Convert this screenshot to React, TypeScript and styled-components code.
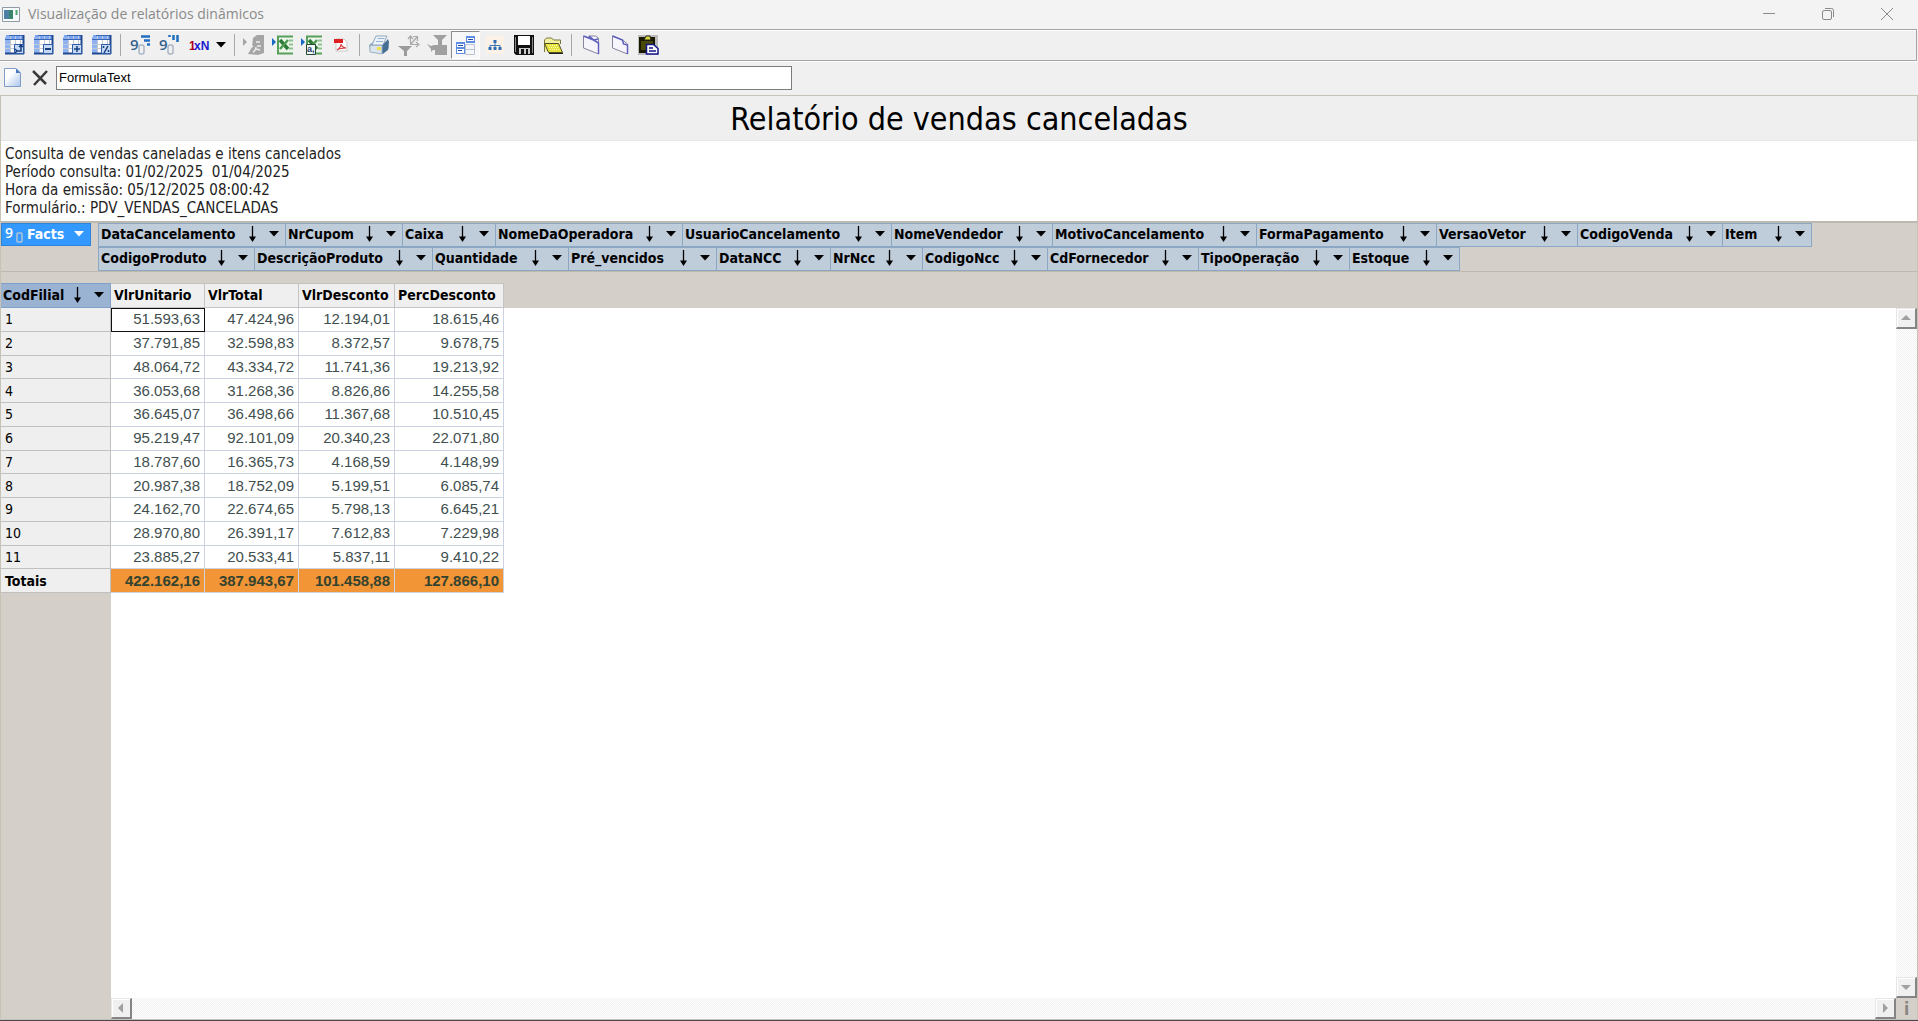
import React, { useState } from "react";
import styled, { createGlobalStyle, css } from "styled-components";

const ui = `Tahoma, "DejaVu Sans Condensed", "DejaVu Sans", sans-serif`;
const sans = `"Liberation Sans", Arial, sans-serif`;

const Global = createGlobalStyle`
  *, *::before, *::after { box-sizing: border-box; }
  body { margin: 0; background: #f0f0f0; color: #000; font-family: ${ui}; }
  button { margin: 0; padding: 0; border: 0; background: none; color: inherit; font: inherit; }
  svg { display: block; overflow: visible; }
`;

const Window = styled.div`
  display: flex;
  flex-direction: column;
  min-height: 100vh;
  border-bottom: 1px solid #4a4450;
`;

const TitleBar = styled.header`
  display: flex;
  align-items: center;
  height: 29px;
  padding: 0 2px 1px;
  background: #f3f3f3;
`;

const WindowTitle = styled.h1`
  flex: 1;
  margin: 0 0 0 8px;
  color: #8a8a8a;
  font: 400 14px/20px "Open Sans", "Noto Sans", sans-serif;
`;

const CaptionButton = styled.button`
  display: grid;
  place-items: center;
  width: 59px;
  height: 28px;
`;

const Toolbar = styled.div`
  display: flex;
  align-items: center;
  height: 32px;
  margin-right: 1px;
  border: 1px solid #a5a5a5;
  border-left: 0;
  box-shadow: inset 0 1px 0 #fff;
`;

const ToolButton = styled.button<{ $pressed?: boolean; $narrow?: boolean }>`
  display: grid;
  place-items: center;
  width: ${(p) => (p.$narrow ? 18 : 29)}px;
  height: 28px;
  ${(p) =>
    p.$pressed &&
    css`
      border: 1px solid #fff;
      border-top-color: #8b8b8b;
      border-left-color: #8b8b8b;
      background: #f8f8f8;
    `}
`;

const Separator = styled.span`
  width: 1px;
  height: 22px;
  margin: 0 4px;
  background: #a8a8a8;
`;

const FormulaBar = styled.div`
  display: flex;
  align-items: center;
  height: 34px;
  padding-bottom: 2px;
  border-top: 1px solid #fff;
`;

const FormulaButton = styled.button<{ $width: number }>`
  display: grid;
  place-items: center;
  width: ${(p) => p.$width}px;
  height: 24px;
`;

const FormulaInput = styled.input`
  width: 736px;
  max-width: 60%;
  height: 24px;
  padding: 0 2px;
  border: 1px solid #7c7c7c;
  border-radius: 0;
  background: #fff;
  color: #000;
  font: 13px ${sans};
  outline: 0;
`;

const Report = styled.main`
  flex: 1;
  display: flex;
  flex-direction: column;
  border: 1px solid #c6c3b4;
  background: #d4cfc8;
`;

const ReportTitle = styled.h2`
  margin: 0;
  height: 45px;
  border-bottom: 1px solid #e6e6e6;
  background: #efefef;
  font-size: 32px;
  font-weight: 400;
  line-height: 46px;
  text-align: center;
`;

const Description = styled.div`
  padding: 4px;
  background: #fff;
  color: #222;
  font-size: 15px;
  line-height: 18px;
  white-space: pre;
  height: 80px;
`;

const Fields = styled.section`
  display: flex;
  gap: 7px;
  border-top: 2px solid #bcbab0;
  border-bottom: 1px solid #bdb9ae;
`;

const FactsButton = styled.button`
  display: flex;
  align-items: center;
  gap: 3px;
  width: 90px;
  height: 23px;
  padding: 0 6px 2px 3px;
  border: 1px solid #2f83d8;
  background: #3399ff;
  color: #fff;
  font-size: 14px;
  font-weight: 700;
`;

const FactsLabel = styled.span`
  flex: 1;
  text-align: left;
`;

const ChipRows = styled.div`
  flex: 1;
`;

const ChipRow = styled.div`
  display: flex;
  height: 24px;
`;

const Chip = styled.button<{ $width: number }>`
  display: flex;
  align-items: center;
  flex: 0 0 ${(p) => p.$width}px;
  height: 24px;
  padding: 0 6px 2px 2px;
  border: 1px solid #8ba7c4;
  border-right-width: 0;
  background: #bfccda;
  font-size: 14px;
  font-weight: 700;
  white-space: nowrap;

  &:last-child {
    border-right-width: 1px;
  }
`;

const ChipLabel = styled.span`
  flex: 1;
  text-align: left;
`;

const Marks = styled.span`
  display: flex;
  align-items: center;
  gap: 13px;
`;

const DataArea = styled.div`
  flex: 1;
  display: grid;
  grid-template-columns: 1fr 21px;
  grid-template-rows: 1fr 21px;
  padding-top: 11px;
`;

const DataColumn = styled.div`
  display: flex;
  flex-direction: column;
`;

const Table = styled.table`
  width: 100%;
  height: 310px;
  table-layout: fixed;
  border-collapse: separate;
  border-spacing: 0;
`;

const Col = styled.col<{ $width?: number }>`
  width: ${(p) => (p.$width ? `${p.$width}px` : "auto")};
`;

const HeadCell = styled.th`
  height: 25px;
  padding: 0 0 2px 3px;
  border: 1px solid #c4c4c4;
  border-left-width: 0;
  background: #efefef;
  font-size: 14px;
  line-height: 20px;
  text-align: left;
  white-space: nowrap;
`;

const CornerCell = styled(HeadCell)`
  padding-left: 2px;
  border-color: #7fa0c8;
  background: #9ab3d3;
`;

const CornerButton = styled.button`
  display: flex;
  align-items: center;
  width: 100%;
  padding-right: 6px;
`;

const RowHead = styled.th<{ $bold?: boolean }>`
  padding: 0 0 0 4px;
  border: 1px solid #c0c0c0;
  border-width: 0 1px 1px 0;
  background: #efefef;
  font-size: 14px;
  font-weight: ${(p) => (p.$bold ? 700 : 400)};
  line-height: 20px;
  text-align: left;
`;

const Cell = styled.td<{ $selected?: boolean; $total?: boolean }>`
  padding: 0 4px 0 0;
  border: 1px solid #ccd2e0;
  border-width: 0 1px 1px 0;
  background: ${(p) => (p.$total ? "#f19537" : "#fff")};
  color: ${(p) => (p.$total ? "#34432f" : "#3f4f50")};
  font: ${(p) => (p.$total ? 700 : 400)} 15px/20px ${sans};
  text-align: right;
  ${(p) =>
    p.$selected &&
    css`
      outline: 1px solid #111;
      outline-offset: -1px;
    `}
`;

const Blank = styled.td<{ $white?: boolean }>`
  padding: 0;
  background: ${(p) => (p.$white ? "#fff" : "transparent")};
`;

const Rest = styled.div`
  flex: 1;
  display: flex;
`;

const RestSide = styled.div`
  width: 110px;
`;

const RestBody = styled.div`
  flex: 1;
  background: #fff;
`;

const track = css`
  display: flex;
  justify-content: space-between;
  background: repeating-conic-gradient(#fff 0 25%, #f1f1f1 0 50%) 0 0 / 2px 2px;
`;

const VerticalBar = styled.div`
  ${track}
  flex-direction: column;
  margin-top: 25px;
`;

const HorizontalBar = styled.div`
  ${track}
  margin-left: 110px;
`;

const ScrollButton = styled.button`
  display: grid;
  place-items: center;
  width: 21px;
  height: 21px;
  border: 1px solid #e6e6e6;
  border-right: 2px solid #858585;
  border-bottom: 2px solid #858585;
  background: #f0f0f0;
  box-shadow: inset 1px 1px 0 #fff;
`;

const InfoCorner = styled.button`
  color: #8a8583;
  font-size: 17px;
  font-weight: 700;
  line-height: 20px;
`;

const Svg = ({ w = 20, h = w, children }: { w?: number; h?: number; children: React.ReactNode }) => (
  <svg width={w} height={h} viewBox={`0 0 ${w} ${h}`} fill="none" aria-hidden="true">
    {children}
  </svg>
);

const DownArrow = () => (
  <Svg w={8} h={18}>
    <path d="M4.500 1v12" stroke="#000" strokeWidth="1.300" />
    <path d="M1 11.500h7L4.500 17z" fill="#000" />
  </Svg>
);

const Caret = ({ color = "#000" }: { color?: string }) => (
  <Svg w={10} h={6}>
    <path d="M0 0h10L5 5.500z" fill={color} />
  </Svg>
);

const FieldMarks = () => (
  <Marks>
    <DownArrow />
    <Caret />
  </Marks>
);

const SheetIcon = ({ children }: { children: React.ReactNode }) => (
  <Svg>
    <path d="M1 0h18v5H1z" fill="#7aa6f4" />
    <path d="M0 5h18v13H0z" fill="#fff" />
    <path d="M0 2h5v16H0z" fill="#8fb2f2" />
    <path d="M0 9.500h19M0 13.500h19M5.500 0v18M10.500 0v18M15.500 0v18" stroke="#c3c8d2" />
    <path d="M0 4.500h19M4 .5h15" stroke="#3a66b8" />
    <path d="M18.500 0v19M0 18.500h19" stroke="#20488f" strokeWidth="2" />
    <path d="M9.500 9.500h9v9h-9z" fill="#c5d8f5" stroke="#2f5ca8" />
    {children}
  </Svg>
);

const digits: React.CSSProperties = { fontFamily: "Open Sans, sans-serif", fontWeight: 600 };

const NineZero = ({ vertical }: { vertical?: boolean }) => (
  <Svg w={22} h={24}>
    <text x="1" y="17" fontSize="15" fill="#36628f" style={digits}>9</text>
    <rect x="10" y="12" width="5" height="9" rx="2" stroke="#a9b4c2" strokeWidth="1.500" />
    {vertical ? (
      <path d="M11.500 2v2M15.500 2v5M19.500 2v7" stroke="#1f6fc0" strokeWidth="2.500" />
    ) : (
      <path d="M12 3.500h9M15 7.500h6M18 11.500h3" stroke="#1f6fc0" strokeWidth="2.500" />
    )}
  </Svg>
);

const FilterCode = () => (
  <Svg>
    <text x="1" y="15" fontSize="12" fontWeight="700" fontFamily="Liberation Sans" fill="#b00020">1</text>
    <text x="6" y="15" fontSize="12" fontWeight="700" fontFamily="Liberation Sans" fill="#1a1ad0">xN</text>
  </Svg>
);

const ExcelIcon = ({ boxed }: { boxed?: boolean }) => (
  <Svg w={22} h={20}>
    <path d="M0 3l4 4-4 4z" fill="#1769c4" />
    <path d="M21 1.500H6v17h15" fill="#eef6ec" stroke="#56a05b" strokeWidth="2" />
    <path d="M17 5.500h4M17 9.500h4M17 13.500h4" stroke="#8fc093" strokeWidth="2" />
    <path d="M8 5l8 9" stroke="#2d7a36" strokeWidth="3.500" />
    <path d="M16 5l-8 9" stroke="#4d9a50" strokeWidth="2.500" />
    {boxed && (
      <>
        <path d="M5.500 9.500h9v10h-9z" fill="#f2f7f4" stroke="#204a35" />
        <text x="6" y="17" fontSize="9" fontWeight="700" fontFamily="Liberation Sans" fill="#173a6a">a,</text>
      </>
    )}
  </Svg>
);

const GreyExport = () => (
  <Svg w={22} h={20}>
    <path d="M0 3l4 4-4 4z" fill="#a5a5a5" />
    <path d="M10 3l4-3h7v18l-6 2-10-1 4-7z" fill="#a5a5a5" />
    <path d="M6 13l4-2M10 17c2-1 3-3 3-5M13 7h4M14 11h4M13 14l4 1" stroke="#ececec" strokeWidth="1.500" />
  </Svg>
);

const PdfIcon = () => (
  <Svg w={14} h={14}>
    <path d="M2 1h8l3 3v9H2z" fill="#fff" stroke="#c9c9c9" />
    <path d="M0 1h9v4H0z" fill="#e02020" />
    <path d="M3 12c3-2 4-5 4-6 0 2 3 4 5 4-3 0-6 0-9 2z" stroke="#d84040" strokeWidth="1.200" />
  </Svg>
);

const PrinterIcon = () => (
  <Svg>
    <path d="M0 10l4-3h15l1 6-6 6-13-2z" fill="#8aa7be" />
    <path d="M7 1h11l-4 9H3z" fill="#edf3f8" stroke="#8fa9bf" />
    <path d="M8.500 3.500h7M7 6.500h7" stroke="#93b3cf" />
    <path d="M1 10.500h12V19L1 17z" fill="#dbe4ec" stroke="#9fb4c6" />
    <path d="M13.500 10.500L19 4l1 3-1 8-5.500 4z" fill="#466f92" />
    <path d="M8 12h4v3H8z" fill="#efe04c" />
  </Svg>
);

const GreyFilter = () => (
  <Svg w={24} h={21}>
    <path d="M2 11h14l-5 5v5H8v-5z" fill="#9b9b9b" />
    <path d="M14.500 2v7.500H22M12 4l2.500-3L17 4M20 7l3 2.500-3 2.500M15 9l6-7M17 1.500h4.500V6" stroke="#aaa" strokeWidth="1.200" />
  </Svg>
);

const GreyFilterExport = () => (
  <Svg>
    <path d="M6 0h14l-5 5v5h-4V5z" fill="#a0a0a0" />
    <path d="M7 10h13v10H8v-5H6l-2 2V14l-4-5 4 2z" fill="#a0a0a0" />
  </Svg>
);

const LayoutIcon = () => (
  <Svg>
    <path d="M9.500 9.500h9v10h-9z" fill="#f4f6fa" stroke="#bcc4d4" />
    <path d="M9.500 14.500h9" stroke="#bcc4d4" />
    <path d="M10 1h9v7h-9zM0 7h9v12H0z" fill="#5e8ee4" />
    <path d="M11 3h7v3h-7zM1 9h7v3H1zM1 14h7v4H1z" fill="#fff" />
    <path d="M12 4.500h5M2 10.500h5M2 15.500h4" stroke="#234f9e" />
  </Svg>
);

const TreeIcon = () => (
  <Svg w={18} h={18}>
    <path d="M0 0h18v18H0z" fill="#fbf1e6" />
    <path d="M9 5v8M4 13V9.500h10V13" stroke="#3b76b8" />
    <path d="M7.500 4h3v3h-3zM2.500 11h3v3h-3zM7.500 11h3v3h-3zM12.500 11h3v3h-3z" fill="#2e6cb3" />
  </Svg>
);

const SaveIcon = () => (
  <Svg>
    <path d="M0 0h20v20H2l-2-2z" fill="#111" />
    <path d="M4 1h12v9H4z" fill="#fff" />
    <path d="M5 13h11v6H5z" fill="#c9c9c9" />
    <path d="M7 14h3v5H7zM12 14h2v5h-2z" fill="#111" />
    <path d="M1.500 2v15M18.500 2v16" stroke="#8a8a8a" />
  </Svg>
);

const OpenIcon = () => (
  <Svg>
    <path d="M1.500 17V5l2-2h5l2 2h7v4" fill="#f4f1a0" stroke="#77773a" />
    <path d="M1.500 8.500h14l4 9h-14z" fill="#e8e33c" stroke="#4d4d28" />
    <path d="M5 10.500h10M6 12.500h10M7 14.500h10" stroke="#faf9b0" strokeDasharray="1 1" />
    <path d="M6 18.500h14" stroke="#222" />
  </Svg>
);

const PageIcon = ({ folded }: { folded?: boolean }) => (
  <Svg w={18} h={20}>
    <path
      d={folded ? "M1.500 1v12l15 6V9l-5-4z" : "M1.500 1v12l15 6V3l-3-2H7v2z"}
      fill="#f5f5fb"
      stroke="#85859c"
    />
    {folded ? (
      <path d="M1.500 1l10 4 1 4 4 1v9" stroke="#5f5fc0" strokeWidth="1.500" />
    ) : (
      <path d="M1.500 1l10 4 5 3v11M7 1l5 4 4-1" stroke="#5f5fc0" strokeWidth="1.500" />
    )}
  </Svg>
);

const PasteIcon = () => (
  <Svg w={21} h={20}>
    <path d="M0 0h20v20H0z" fill="#bdbdbd" />
    <path d="M1 2h16v16H1z" fill="#191900" />
    <path d="M3 6h12v9H3z" fill="#4a4a06" />
    <path d="M6 5h7l-1-4H8z" fill="#d8d83a" stroke="#222" />
    <path d="M8.500 9.500h7l4.500 4v5.500H8.500z" fill="#fff" stroke="#15158a" strokeWidth="1.500" />
    <path d="M11 13h4M11 16h7" stroke="#15158a" strokeWidth="1.500" />
  </Svg>
);

const NewPageIcon = () => (
  <Svg w={17} h={19}>
    <defs>
      <linearGradient id="paper" x1="0" y1="0" x2="1" y2="1">
        <stop offset=".35" stopColor="#fff" />
        <stop offset="1" stopColor="#a9c3ec" />
      </linearGradient>
    </defs>
    <path d="M.5.5H12L16.500 5v13.500H.5z" fill="url(#paper)" stroke="#7f9cc4" />
    <path d="M12 .5V5h4.500z" fill="#4679c0" />
  </Svg>
);

const AppIcon = () => (
  <Svg w={18} h={15}>
    <path d="M.5.500h17v14H.5z" fill="#f6fafc" stroke="#8f9ba6" />
    <path d="M2 3h9v9H2z" fill="#39866f" />
    <path d="M2 3h5v9H2z" fill="#4e7fa5" />
    <path d="M14.500 3v5" stroke="#49a56a" strokeWidth="2" />
  </Svg>
);

const ScrollArrow = ({ turn }: { turn: number }) => (
  <Svg w={10}>
    <path d="M0 7h10L5 2z" fill="#a0a0a0" transform={`rotate(${turn} 5 5)`} />
  </Svg>
);

type Tool = { name: string; icon: React.ReactNode; pressed?: boolean; narrow?: boolean };

const toolGroups: Tool[][] = [
  [
    { name: "Girar tabela", icon: <SheetIcon><path d="M12 16h4v-5M10 14l2 2-2 2M14 12l2-2 2 2" stroke="#173f80" strokeWidth="1.500" /></SheetIcon> },
    { name: "Recolher", icon: <SheetIcon><path d="M11 14h6" stroke="#173f80" strokeWidth="2" /></SheetIcon> },
    { name: "Expandir", icon: <SheetIcon><path d="M11 14h6M14 11v6" stroke="#173f80" strokeWidth="1.500" /></SheetIcon> },
    { name: "Percentual", icon: <SheetIcon><path d="M16 11l-4 7M11.500 11v2M16.500 15v2" stroke="#173f80" strokeWidth="1.500" /></SheetIcon> },
  ],
  [
    { name: "Fatos em linhas", icon: <NineZero /> },
    { name: "Fatos em colunas", icon: <NineZero vertical /> },
    { name: "1xN", icon: <FilterCode /> },
    { name: "Opções", icon: <Caret />, narrow: true },
  ],
  [
    { name: "Exportar", icon: <GreyExport /> },
    { name: "Exportar para Excel", icon: <ExcelIcon /> },
    { name: "Exportar formatado", icon: <ExcelIcon boxed /> },
    { name: "Exportar PDF", icon: <PdfIcon /> },
  ],
  [
    { name: "Imprimir", icon: <PrinterIcon /> },
    { name: "Filtro", icon: <GreyFilter /> },
    { name: "Exportar filtro", icon: <GreyFilterExport /> },
    { name: "Layout", icon: <LayoutIcon />, pressed: true },
    { name: "Hierarquia", icon: <TreeIcon /> },
    { name: "Salvar", icon: <SaveIcon /> },
    { name: "Abrir", icon: <OpenIcon /> },
  ],
  [
    { name: "Copiar", icon: <PageIcon /> },
    { name: "Copiar página", icon: <PageIcon folded /> },
    { name: "Colar", icon: <PasteIcon /> },
  ],
];

const fieldRows: [string, number][][] = [
  [
    ["DataCancelamento", 187], ["NrCupom", 117], ["Caixa", 93], ["NomeDaOperadora", 187],
    ["UsuarioCancelamento", 209], ["NomeVendedor", 161], ["MotivoCancelamento", 204],
    ["FormaPagamento", 180], ["VersaoVetor", 141], ["CodigoVenda", 145], ["Item", 90],
  ],
  [
    ["CodigoProduto", 156], ["DescriçãoProduto", 178], ["Quantidade", 136], ["Pré_vencidos", 148],
    ["DataNCC", 114], ["NrNcc", 92], ["CodigoNcc", 125], ["CdFornecedor", 151],
    ["TipoOperação", 151], ["Estoque", 111],
  ],
];

const columns = ["VlrUnitario", "VlrTotal", "VlrDesconto", "PercDesconto"];

const data = [
  ["51.593,63", "47.424,96", "12.194,01", "18.615,46"],
  ["37.791,85", "32.598,83", "8.372,57", "9.678,75"],
  ["48.064,72", "43.334,72", "11.741,36", "19.213,92"],
  ["36.053,68", "31.268,36", "8.826,86", "14.255,58"],
  ["36.645,07", "36.498,66", "11.367,68", "10.510,45"],
  ["95.219,47", "92.101,09", "20.340,23", "22.071,80"],
  ["18.787,60", "16.365,73", "4.168,59", "4.148,99"],
  ["20.987,38", "18.752,09", "5.199,51", "6.085,74"],
  ["24.162,70", "22.674,65", "5.798,13", "6.645,21"],
  ["28.970,80", "26.391,17", "7.612,83", "7.229,98"],
  ["23.885,27", "20.533,41", "5.837,11", "9.410,22"],
];

const totals = ["422.162,16", "387.943,67", "101.458,88", "127.866,10"];

export default function App() {
  const [formula, setFormula] = useState("FormulaText");
  const [selected, setSelected] = useState("0-0");

  return (
    <>
      <Global />
      <Window>
        <TitleBar>
          <AppIcon />
          <WindowTitle>Visualização de relatórios dinâmicos</WindowTitle>
          <CaptionButton aria-label="Minimizar">
            <Svg w={12}><path d="M0 5.500h12" stroke="#8a8a8a" /></Svg>
          </CaptionButton>
          <CaptionButton aria-label="Restaurar">
            <Svg w={12}>
              <rect x=".5" y="2.500" width="9" height="9" rx="1.500" stroke="#8a8a8a" />
              <path d="M3 .5h6.500a2 2 0 0 1 2 2V9" stroke="#8a8a8a" />
            </Svg>
          </CaptionButton>
          <CaptionButton aria-label="Fechar">
            <Svg w={12}><path d="M0 0l12 12M12 0L0 12" stroke="#8a8a8a" /></Svg>
          </CaptionButton>
        </TitleBar>

        <Toolbar role="toolbar">
          {toolGroups.map((group, g) => (
            <React.Fragment key={g}>
              {g > 0 && <Separator />}
              {group.map((tool) => (
                <ToolButton key={tool.name} aria-label={tool.name} $pressed={tool.pressed} $narrow={tool.narrow}>
                  {tool.icon}
                </ToolButton>
              ))}
            </React.Fragment>
          ))}
        </Toolbar>

        <FormulaBar>
          <FormulaButton $width={24} aria-label="Nova fórmula"><NewPageIcon /></FormulaButton>
          <FormulaButton $width={32} aria-label="Limpar fórmula">
            <Svg w={16}><path d="M1 1l13 13M15 1L2 15" stroke="#3a3a3a" strokeWidth="2.500" /></Svg>
          </FormulaButton>
          <FormulaInput aria-label="Fórmula" value={formula} onChange={(e) => setFormula(e.target.value)} />
        </FormulaBar>

        <Report>
          <ReportTitle>Relatório de vendas canceladas</ReportTitle>
          <Description>
            <div>Consulta de vendas caneladas e itens cancelados</div>
            <div>{"Período consulta: 01/02/2025  01/04/2025"}</div>
            <div>Hora da emissão: 05/12/2025 08:00:42</div>
            <div>Formulário.: PDV_VENDAS_CANCELADAS</div>
          </Description>

          <Fields>
            <FactsButton>
              <Svg w={19} h={20}>
                <text x="0" y="14" fontSize="14" fill="#fff" style={digits}>9</text>
                <rect x="12" y="9" width="5" height="9" rx="1" stroke="#b4c4d8" strokeWidth="1.500" />
              </Svg>
              <FactsLabel>Facts</FactsLabel>
              <Caret color="#fff" />
            </FactsButton>
            <ChipRows>
              {fieldRows.map((row, r) => (
                <ChipRow key={r}>
                  {row.map(([name, width]) => (
                    <Chip key={name} $width={width}>
                      <ChipLabel>{name}</ChipLabel>
                      <FieldMarks />
                    </Chip>
                  ))}
                </ChipRow>
              ))}
            </ChipRows>
          </Fields>

          <DataArea>
            <DataColumn>
              <Table>
                <colgroup>
                  <Col $width={110} />
                  <Col $width={94} />
                  <Col $width={94} />
                  <Col $width={96} />
                  <Col $width={109} />
                  <Col />
                </colgroup>
                <thead>
                  <tr>
                    <CornerCell scope="col">
                      <CornerButton>
                        <ChipLabel>CodFilial</ChipLabel>
                        <FieldMarks />
                      </CornerButton>
                    </CornerCell>
                    {columns.map((name) => (
                      <HeadCell key={name} scope="col">{name}</HeadCell>
                    ))}
                    <Blank />
                  </tr>
                </thead>
                <tbody>
                  {data.map((row, r) => (
                    <tr key={r}>
                      <RowHead scope="row">{r + 1}</RowHead>
                      {row.map((value, c) => (
                        <Cell key={c} $selected={selected === `${r}-${c}`} onClick={() => setSelected(`${r}-${c}`)}>
                          {value}
                        </Cell>
                      ))}
                      <Blank $white />
                    </tr>
                  ))}
                  <tr>
                    <RowHead scope="row" $bold>Totais</RowHead>
                    {totals.map((value) => (
                      <Cell key={value} $total>{value}</Cell>
                    ))}
                    <Blank $white />
                  </tr>
                </tbody>
              </Table>
              <Rest>
                <RestSide />
                <RestBody />
              </Rest>
            </DataColumn>
            <VerticalBar>
              <ScrollButton aria-label="Rolar para cima"><ScrollArrow turn={0} /></ScrollButton>
              <ScrollButton aria-label="Rolar para baixo"><ScrollArrow turn={180} /></ScrollButton>
            </VerticalBar>
            <HorizontalBar>
              <ScrollButton aria-label="Rolar para a esquerda"><ScrollArrow turn={-90} /></ScrollButton>
              <ScrollButton aria-label="Rolar para a direita"><ScrollArrow turn={90} /></ScrollButton>
            </HorizontalBar>
            <InfoCorner>i</InfoCorner>
          </DataArea>
        </Report>
      </Window>
    </>
  );
}
